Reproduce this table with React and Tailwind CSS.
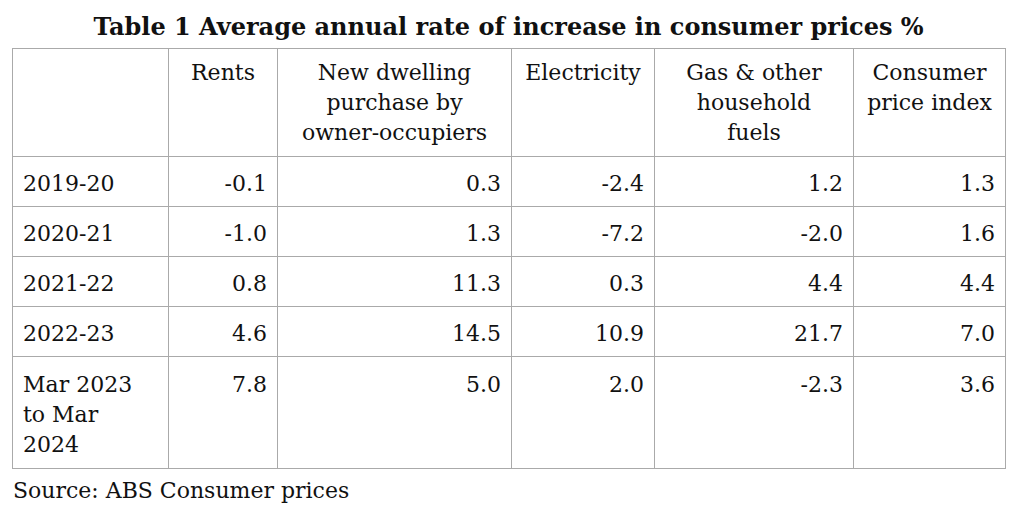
const headers = [
  [],
  ["Rents"],
  ["New dwelling", "purchase by", "owner-occupiers"],
  ["Electricity"],
  ["Gas & other", "household", "fuels"],
  ["Consumer", "price index"],
];

const rows = [
  ["2019-20", "-0.1", "0.3", "-2.4", "1.2", "1.3"],
  ["2020-21", "-1.0", "1.3", "-7.2", "-2.0", "1.6"],
  ["2021-22", "0.8", "11.3", "0.3", "4.4", "4.4"],
  ["2022-23", "4.6", "14.5", "10.9", "21.7", "7.0"],
];

const lastRow = [["Mar 2023", "to Mar", "2024"], ["7.8"], ["5.0"], ["2.0"], ["-2.3"], ["3.6"]];

const widths = ["w-[156px]", "w-[109px]", "w-[234px]", "w-[143px]", "w-[199px]", "w-[152px]"];

export default function App() {
  return (
    <div
      className="w-[1024px] h-[519px] bg-white text-[#111] pl-[12px]"
      style={{ fontFamily: '"DejaVu Serif", Georgia, serif' }}
    >
      <div className="w-[993px] h-[48px] pt-[12px] text-center text-[24px] leading-[30px] font-bold whitespace-nowrap">
        Table 1 Average annual rate of increase in consumer prices %
      </div>
      <table className="w-[993px] table-fixed border-collapse text-[22px] leading-[30px]">
        <colgroup>
          {widths.map((w, i) => (
            <col key={i} className={w} />
          ))}
        </colgroup>
        <thead>
          <tr className="h-[108px]">
            {headers.map((h, i) => (
              <th
                key={i}
                className="border border-[#aaa] align-top text-center font-normal px-[4px] pt-[9px] whitespace-nowrap"
              >
                {h.map((line) => (
                  <div key={line}>{line}</div>
                ))}
              </th>
            ))}
          </tr>
        </thead>
        <tbody>
          {rows.map((r) => (
            <tr key={r[0]} className="h-[50px]">
              {r.map((c, i) => (
                <td
                  key={i}
                  className={
                    "border border-[#aaa] align-top px-[10px] pt-[12px] " +
                    (i === 0 ? "text-left" : "text-right")
                  }
                >
                  {c}
                </td>
              ))}
            </tr>
          ))}
          <tr className="h-[112px]">
            {lastRow.map((c, i) => (
              <td
                key={i}
                className={
                  "border border-[#aaa] align-top px-[10px] pt-[13px] whitespace-nowrap " +
                  (i === 0 ? "text-left" : "text-right")
                }
              >
                {c.map((line) => (
                  <div key={line}>{line}</div>
                ))}
              </td>
            ))}
          </tr>
        </tbody>
      </table>
      <div className="pt-[7px] text-[22px] leading-[30px] pl-[1px]">Source: ABS Consumer prices</div>
    </div>
  );
}
